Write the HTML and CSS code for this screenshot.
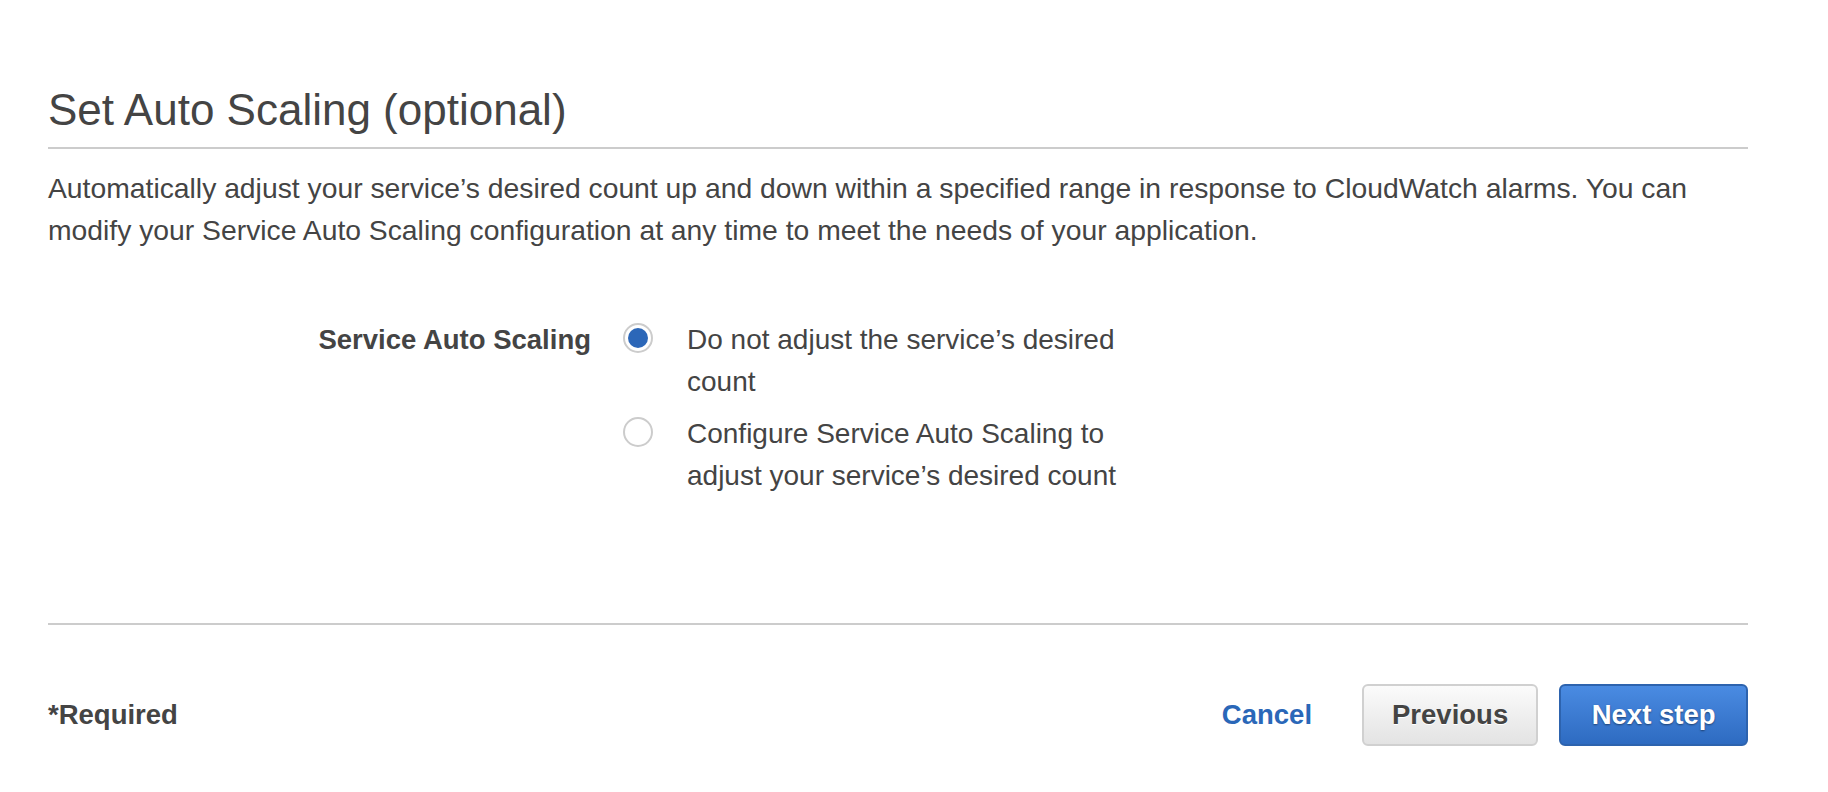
FILE: index.html
```html
<!DOCTYPE html>
<html lang="en">
<head>
<meta charset="utf-8">
<title>Set Auto Scaling (optional)</title>
<link rel="stylesheet" href="styles.css">
</head>
<body>
<div class="page">
  <h2 class="title">Set Auto Scaling (optional)</h2>
  <p class="intro">Automatically adjust your service’s desired count up and down within a specified range in response to CloudWatch alarms. You can modify your Service Auto Scaling configuration at any time to meet the needs of your application.</p>

  <div class="form-row">
    <div class="form-label">Service Auto Scaling</div>
    <div class="options">
      <label class="option">
        <span class="radio checked"><span class="dot"></span></span>
        <span class="option-text">Do not adjust the service’s desired count</span>
      </label>
      <label class="option">
        <span class="radio"></span>
        <span class="option-text">Configure Service Auto Scaling to adjust your service’s desired count</span>
      </label>
    </div>
  </div>

  <div class="footer">
    <div class="required">*Required</div>
    <div class="actions">
      <a class="cancel" href="#">Cancel</a>
      <button class="btn btn-secondary" type="button">Previous</button>
      <button class="btn btn-primary" type="button">Next step</button>
    </div>
  </div>
</div>
</body>
</html>
```

FILE: styles.css
```css
html, body {
  margin: 0;
  padding: 0;
  background: #ffffff;
}

body {
  font-family: "Liberation Sans", Arial, Helvetica, sans-serif;
  color: #444444;
}

.page {
  width: 1700px;
  padding: 84px 0 0 48px;
}

.title {
  margin: 0;
  font-size: 44px;
  font-weight: normal;
  line-height: 52px;
  color: #444444;
  padding-bottom: 11px;
  border-bottom: 2px solid #cccccc;
}

.intro {
  margin: 18px 0 0 0;
  font-size: 28.3px;
  line-height: 42px;
}

.form-row {
  display: grid;
  grid-template-columns: 543px 1fr;
  column-gap: 32px;
  margin-top: 68px;
  padding-bottom: 126px;
  border-bottom: 2px solid #cccccc;
}

.form-label {
  text-align: right;
  font-weight: bold;
  font-size: 27.5px;
  line-height: 42px;
}

.options {
  display: flex;
  flex-direction: column;
  gap: 10px;
}

.option {
  display: flex;
  align-items: flex-start;
  gap: 34px;
  cursor: pointer;
}

.radio {
  box-sizing: border-box;
  flex: 0 0 30px;
  width: 30px;
  height: 30px;
  margin-top: 4px;
  border: 2px solid #cccccc;
  border-radius: 50%;
  background: #ffffff;
  display: flex;
  align-items: center;
  justify-content: center;
}

.radio .dot {
  width: 20px;
  height: 20px;
  border-radius: 50%;
  background: #2c67b8;
}

.option-text {
  width: 465px;
  font-size: 28px;
  line-height: 42px;
}

.footer {
  display: flex;
  align-items: center;
  justify-content: space-between;
  padding-top: 59px;
}

.required {
  font-weight: bold;
  font-size: 27.5px;
  line-height: 42px;
}

.actions {
  display: flex;
  align-items: center;
}

.cancel {
  font-weight: bold;
  font-size: 27.5px;
  color: #2a67b8;
  text-decoration: none;
  margin-right: 50px;
}

.btn {
  box-sizing: border-box;
  height: 62px;
  border-radius: 6px;
  font-family: inherit;
  font-weight: bold;
  font-size: 27.5px;
  display: inline-flex;
  align-items: center;
  justify-content: center;
  cursor: pointer;
}

.btn-secondary {
  padding: 0 28px;
  color: #444444;
  background: linear-gradient(#fbfbfb, #e3e3e3);
  border: 2px solid #d0d0d0;
  text-shadow: 0 1px 0 #ffffff;
}

.btn-primary {
  margin-left: 21px;
  padding: 0 30.5px;
  color: #ffffff;
  background: linear-gradient(#4a8be2, #2e6bc1);
  border: 2px solid #2d63ae;
  text-shadow: 0 1px 2px rgba(0, 0, 0, 0.45);
}
```
